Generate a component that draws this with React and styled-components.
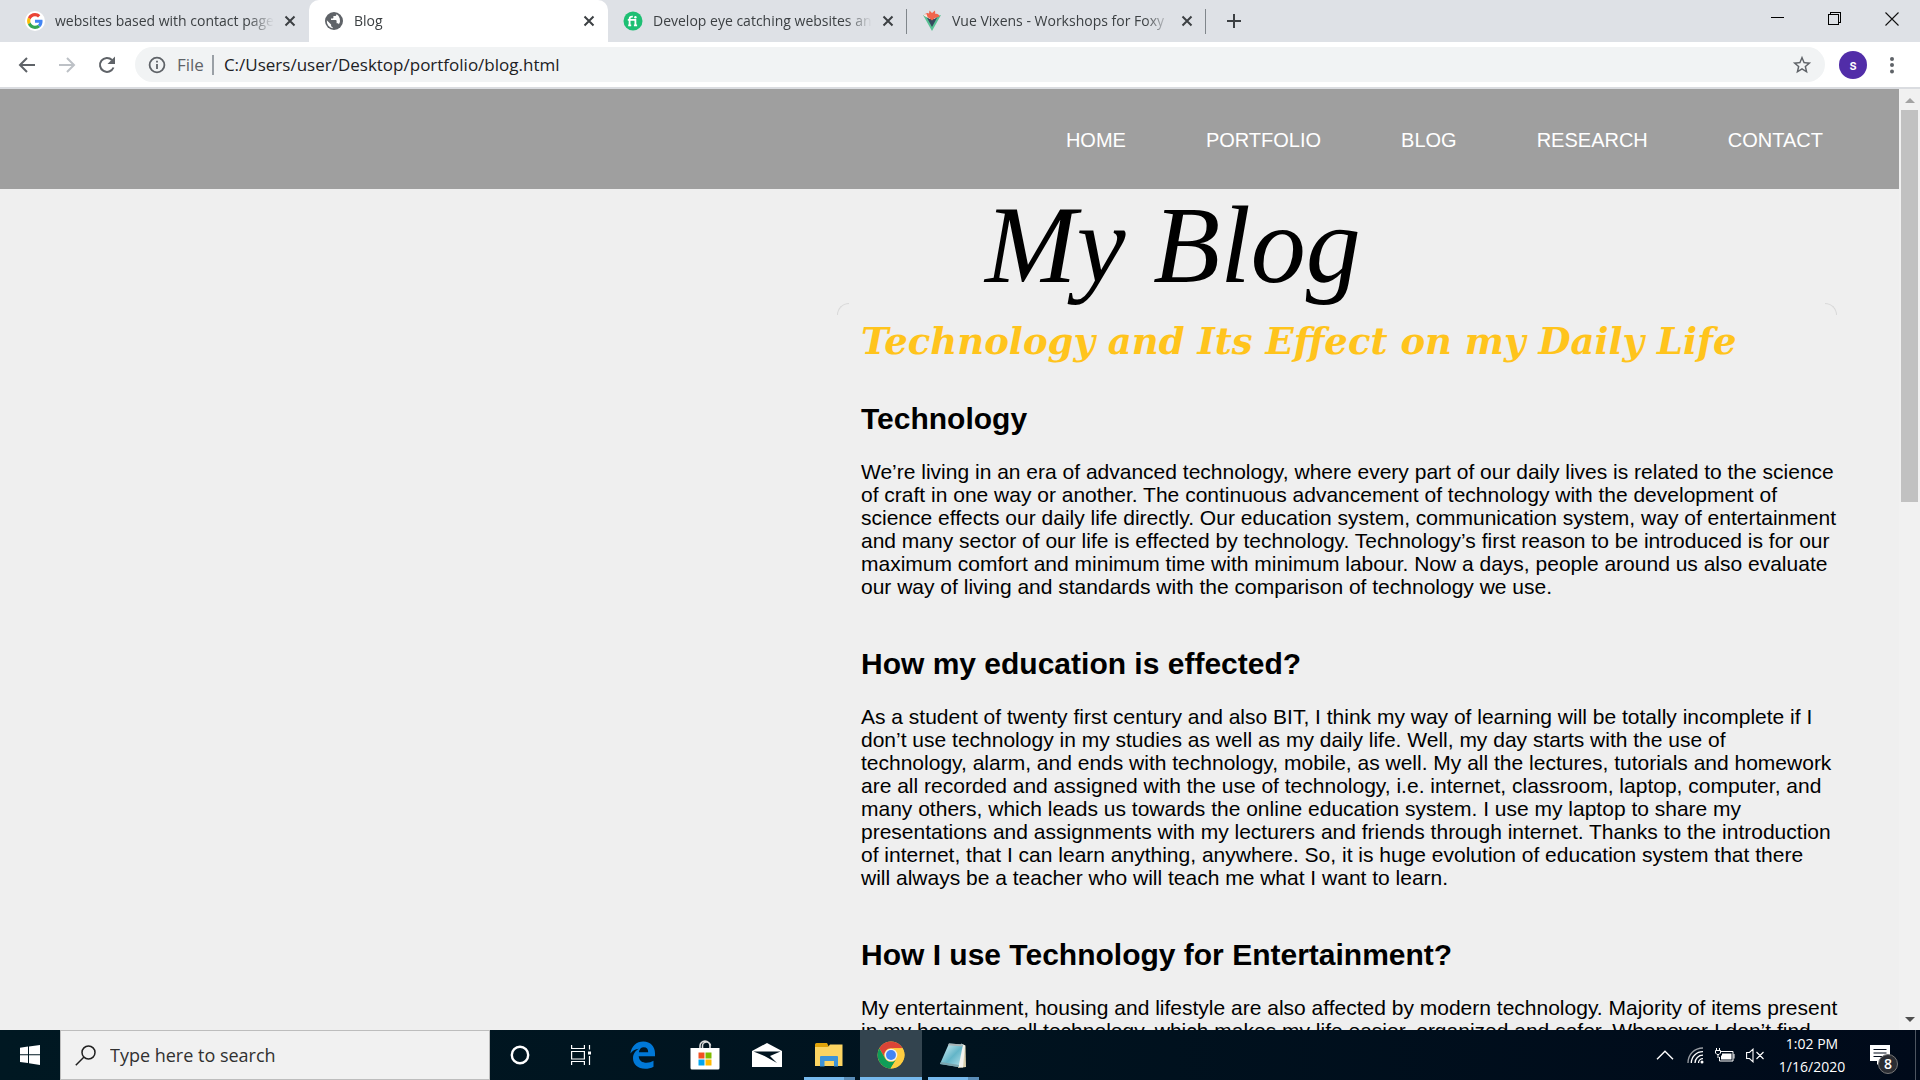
import React from "react";
import styled, { createGlobalStyle } from "styled-components";

const GlobalStyle = createGlobalStyle`
  *, *::before, *::after { box-sizing: border-box; }
  body { margin: 0; background: #efefef; }
  button { border: 0; padding: 0; background: none; color: inherit; font: inherit; }
  svg { display: block; flex: none; }
`;

const ui = `"Open Sans", "Noto Sans", sans-serif`;
const arial = `"Liberation Sans", Arial, sans-serif`;
const serif = `"Liberation Serif", "Times New Roman", serif`;
const wideSerif = `"DejaVu Serif", Georgia, serif`;

const Screen = styled.div`
  display: flex;
  flex-direction: column;
  height: 100vh;
  overflow: hidden;
  font-family: ${ui};
`;

/* ---------- browser window ---------- */

const TabStrip = styled.header`
  display: flex;
  height: 42px;
  flex: none;
  padding-left: 10px;
  background: #dee1e6;
`;

const Tab = styled.div`
  display: flex;
  align-items: center;
  width: 299px;
  padding: 0 11px 0 15px;
  color: #3c4043;
  background: ${(p) => (p.$active ? "#fff" : "transparent")};
  border-radius: ${(p) => (p.$active ? "10px 10px 0 0" : "0")};
`;

const TabLabel = styled.span`
  flex: 1;
  min-width: 0;
  margin-left: 10px;
  overflow: hidden;
  white-space: nowrap;
  font-size: 14px;
  line-height: 20px;
  mask-image: linear-gradient(to right, #000 88%, transparent 100%);
`;

const TabClose = styled.button`
  display: grid;
  place-items: center;
  width: 16px;
  height: 20px;
  margin-left: 8px;
  color: #3c4043;
`;

const TabDivider = styled.span`
  align-self: center;
  width: 1px;
  height: 25px;
  margin-left: -1px;
  background: #80868b;
`;

const NewTab = styled.button`
  display: grid;
  place-items: center;
  width: 56px;
  color: #3c4043;
`;

const WindowButtons = styled.div`
  display: flex;
  margin-left: auto;
`;

const WindowButton = styled.button`
  display: grid;
  place-items: center;
  width: 57px;
  height: 37px;
`;

const Toolbar = styled.div`
  display: flex;
  align-items: center;
  flex: none;
  height: 47px;
  padding: 0 14px 0 7px;
  background: #fff;
  border-bottom: 2px solid #dadce0;
`;

const ToolButton = styled.button`
  display: grid;
  place-items: center;
  width: 40px;
  height: 36px;
  color: ${(p) => (p.$dim ? "#bdc1c6" : "#5f6368")};
`;

const AddressBar = styled.label`
  display: flex;
  align-items: center;
  flex: 1;
  height: 35px;
  margin-left: 8px;
  padding: 0 12px;
  border-radius: 18px;
  background: #f1f3f4;
  color: #5f6368;
  font-size: 17px;
  line-height: 24px;
`;

const Scheme = styled.span`
  margin-left: 10px;
  padding-right: 8px;
`;

const SchemeDivider = styled.span`
  width: 2px;
  height: 20px;
  background: #9aa0a6;
`;

const AddressInput = styled.input`
  flex: 1;
  min-width: 0;
  margin-left: 10px;
  padding: 0;
  border: 0;
  outline: 0;
  background: none;
  color: #202124;
  font-family: ${ui};
  font-size: 17px;
  line-height: 24px;
`;

const Avatar = styled.button`
  width: 28px;
  height: 28px;
  margin: 0 11px 0 14px;
  border-radius: 50%;
  background: #512da8;
  color: #fff;
  font-family: Roboto, ${arial};
  font-size: 14px;
  font-weight: 500;
`;

const MenuButton = styled.button`
  display: grid;
  place-items: center;
  width: 28px;
  height: 28px;
  color: #5f6368;
`;

/* ---------- the web page ---------- */

const Viewport = styled.div`
  display: flex;
  flex: 1;
  min-height: 0;
`;

const Page = styled.div`
  flex: 1;
  min-width: 0;
  overflow: hidden;
  background: #efefef;
  color: #000;
  font-family: ${arial};
`;

const SiteNav = styled.nav`
  display: flex;
  justify-content: flex-end;
  align-items: center;
  gap: 80px;
  height: 100px;
  padding: 2px 76px 0 24px;
  background: #9f9f9f;
`;

const NavLink = styled.a`
  color: #fff;
  font-size: 20px;
  line-height: 24px;
  text-decoration: none;
`;

const Column = styled.main`
  width: 100%;
  max-width: 1000px;
  margin: 0 62px 0 auto;
`;

const PageTitle = styled.h1`
  margin: 0;
  padding-left: 148px;
  font-family: ${serif};
  font-size: 110px;
  font-style: italic;
  font-weight: 400;
  line-height: 112px;
  height: 114px;
`;

const Article = styled.article`
  position: relative;
  padding: 10px 0 0 24px;

  &::before,
  &::after {
    content: "";
    position: absolute;
    top: 0;
    width: 12px;
    height: 12px;
    border-top: 1px solid #d9d9d9;
  }
  &::before {
    left: 0;
    border-left: 1px solid #d9d9d9;
    border-radius: 12px 0 0 0;
  }
  &::after {
    right: 0;
    border-right: 1px solid #d9d9d9;
    border-radius: 0 12px 0 0;
  }
`;

const ArticleTitle = styled.h2`
  margin: 0 0 33px;
  color: #ffc41c;
  font-family: ${wideSerif};
  font-size: 37px;
  font-style: italic;
  font-weight: 700;
  line-height: 56px;
  white-space: nowrap;
`;

const Section = styled.section`
  margin-bottom: 49px;
`;

const SectionTitle = styled.h3`
  margin: 0 0 24px;
  font-size: 30px;
  font-weight: 700;
  line-height: 34px;
`;

const Paragraph = styled.p`
  margin: 0;
  font-size: 21px;
  line-height: 23px;
  white-space: nowrap;
`;

const Line = styled.span`
  display: block;
`;

const Scrollbar = styled.div`
  display: flex;
  flex-direction: column;
  align-items: center;
  width: 21px;
  background: #f1f1f1;
`;

const ScrollButton = styled.button`
  display: grid;
  place-items: center;
  width: 21px;
  height: 21px;
  color: ${(p) => (p.$dim ? "#a3a3a3" : "#505050")};
`;

const Thumb = styled.div`
  width: 17px;
  height: 392px;
  margin-bottom: auto;
  background: #c1c1c1;
`;

/* ---------- taskbar ---------- */

const Taskbar = styled.footer`
  display: flex;
  flex: none;
  height: 50px;
  background: linear-gradient(to right, #001822 0%, #00131f 50%, #000a1a 100%);
  color: #fff;
`;

const StartButton = styled.button`
  display: grid;
  place-items: center;
  width: 60px;
`;

const SearchBox = styled.label`
  display: flex;
  align-items: center;
  width: 430px;
  padding-left: 14px;
  border: 1px solid #bdbdbd;
  background: #f1f1f1;
  color: #202020;
`;

const SearchInput = styled.input`
  flex: 1;
  min-width: 0;
  margin-left: 14px;
  padding: 0;
  border: 0;
  outline: 0;
  background: none;
  font-family: ${ui};
  font-size: 18px;
  line-height: 24px;
  &::placeholder { color: #303030; opacity: 1; }
`;

const AppButton = styled.button`
  position: relative;
  display: grid;
  place-items: center;
  width: ${(p) => (p.$narrow ? "60px" : "62px")};
  background: ${(p) => (p.$active ? "#33444f" : "transparent")};
`;

const Running = styled.span`
  position: absolute;
  bottom: 0;
  left: ${(p) => (p.$full ? "0" : "6px")};
  right: ${(p) => (p.$full ? "0" : "5px")};
  height: 3px;
  background: ${(p) =>
    p.$full ? "#76b9ed" : "linear-gradient(to right, #76b9ed 78%, #5a8db8 78%)"};
`;

const Tray = styled.div`
  display: flex;
  align-items: center;
  margin-left: auto;
  padding-right: 4px;
`;

const TrayButton = styled.button`
  display: grid;
  place-items: center;
  width: 30px;
  height: 50px;
`;

const Clock = styled.time`
  width: 84px;
  font-size: 14px;
  line-height: 23px;
  text-align: center;
`;

const Notifications = styled.button`
  position: relative;
  display: flex;
  align-items: center;
  width: 62px;
  height: 50px;
  padding-left: 16px;
  border-right: 1px solid #4d5560;
`;

const Count = styled.span`
  position: absolute;
  left: 24px;
  top: 24px;
  width: 20px;
  height: 20px;
  border: 1px solid #777;
  border-radius: 50%;
  background: #2b2d33;
  font-size: 14px;
  font-weight: 600;
  line-height: 18px;
`;

/* ---------- drawings ---------- */

const GoogleIcon = () => (
  <svg width="20" height="20" viewBox="0 0 48 48">
    <circle cx="24" cy="24" r="24" fill="#fff" />
    <g transform="translate(5 5) scale(.79)">
      <path fill="#EA4335" d="M24 9.5c3.54 0 6.71 1.22 9.21 3.6l6.85-6.85C35.9 2.38 30.47 0 24 0 14.62 0 6.51 5.38 2.56 13.22l7.98 6.19C12.43 13.72 17.74 9.5 24 9.5z" />
      <path fill="#4285F4" d="M46.98 24.55c0-1.57-.15-3.09-.38-4.55H24v9.02h12.94c-.58 2.96-2.26 5.48-4.78 7.18l7.73 6c4.51-4.18 7.09-10.36 7.09-17.65z" />
      <path fill="#FBBC05" d="M10.53 28.59A14.5 14.5 0 0 1 9.77 24c0-1.6.27-3.14.76-4.59l-7.98-6.19A23.9 23.9 0 0 0 0 24c0 3.88.92 7.54 2.56 10.78l7.97-6.19z" />
      <path fill="#34A853" d="M24 48c6.48 0 11.93-2.13 15.89-5.81l-7.73-6c-2.15 1.45-4.92 2.3-8.16 2.3-6.26 0-11.57-4.22-13.47-9.91l-7.98 6.19C6.51 42.62 14.62 48 24 48z" />
    </g>
  </svg>
);

const GlobeIcon = () => (
  <svg width="20" height="20" viewBox="0 0 20 20">
    <circle cx="10" cy="10" r="9" fill="#5f6368" />
    <path d="M2.800 9.300l4.300 4.200v1c0 .9.600 1.500 1.500 1.500v1.300A7.400 7.400 0 0 1 2.800 9.300zM12.500 3.100v.5c0 .9-.7 1.500-1.500 1.500H9.400v1.600c0 .4-.4.8-.8.8H7v1.600h4.800c.4 0 .8.4.8.8v2.300h.8c.7 0 1.300.5 1.500 1.100A7.400 7.400 0 0 0 12.500 3.100z" fill="#fff" />
  </svg>
);

const FiverrIcon = () => (
  <svg width="20" height="20" viewBox="0 0 20 20">
    <circle cx="10" cy="10" r="9.500" fill="#1dbf73" />
    <g stroke="#fff" strokeWidth="1.800" fill="none">
      <path d="M6.600 14.800V8c0-1.800 1.200-2.600 3.200-2.300M4.800 8.900h7.600v5.900M5.200 14.300h3M10.900 14.300h3.200" />
    </g>
    <circle cx="12.400" cy="6.200" r="1.200" fill="#fff" />
  </svg>
);

const VixensIcon = () => (
  <svg width="20" height="22" viewBox="0 0 20 22">
    <path d="M1 5l9 16 9-16-4 1-5 9-5-9z" fill="#57c193" />
    <path d="M4.500 7L10 17l5.500-10-3 2h-5z" fill="#35495e" />
    <path d="M2 5.500C4 2.500 6 2.500 7 3.500L7.500.5 10 3l3-2.500.3 3.500c2-.5 3.700.5 4.200 2.500L13 8l-3 2.500L7 8z" fill="#f1664d" />
    <path d="M1.500 5.500l2.800-1.800L6 8z" fill="#fbe9e4" />
  </svg>
);

const CrossIcon = () => (
  <svg width="12" height="12" viewBox="0 0 12 12" stroke="currentColor" strokeWidth="2">
    <path d="M1.500 1.500l9 9M10.500 1.500l-9 9" />
  </svg>
);

const PlusIcon = () => (
  <svg width="16" height="16" viewBox="0 0 16 16" stroke="currentColor" strokeWidth="2">
    <path d="M8 1v14M1 8h14" />
  </svg>
);

const MinimizeIcon = () => (
  <svg width="13" height="13" viewBox="0 0 13 13" stroke="#000" shapeRendering="crispEdges">
    <path d="M0 5.500h13" />
  </svg>
);

const RestoreIcon = () => (
  <svg width="13" height="13" viewBox="0 0 13 13" fill="none" stroke="#000" shapeRendering="crispEdges">
    <path d="M.5 2.500h10v10h-10zM2.500 2.500v-2h10v10h-2" />
  </svg>
);

const CloseIcon = () => (
  <svg width="14" height="14" viewBox="0 0 14 14" stroke="#111" strokeWidth="1.100">
    <path d="M.5.5l13 13M13.500.5l-13 13" />
  </svg>
);

const BackIcon = ({ flip }) => (
  <svg width="18" height="18" viewBox="0 0 18 18" fill="none" stroke="currentColor" strokeWidth="2" transform={flip ? "scale(-1 1)" : undefined}>
    <path d="M17 9H2.500M9 2L2 9l7 7" />
  </svg>
);

const ReloadIcon = () => (
  <svg width="20" height="20" viewBox="0 0 20 20">
    <path d="M16.500 12.500A7 7 0 1 1 15 5" fill="none" stroke="currentColor" strokeWidth="2" />
    <path d="M18 1.500V9h-7.500z" fill="currentColor" />
  </svg>
);

const InfoIcon = () => (
  <svg width="20" height="20" viewBox="0 0 20 20" fill="none" stroke="currentColor" strokeWidth="1.800">
    <circle cx="10" cy="10" r="7.400" />
    <path d="M10 9v5M10 5.800v1.800" />
  </svg>
);

const StarIcon = () => (
  <svg width="22" height="22" viewBox="0 0 24 24" fill="#5f6368">
    <path d="M22 9.240l-7.190-.62L12 2 9.190 8.630 2 9.240l5.460 4.730L5.820 21 12 17.270 18.180 21l-1.630-7.030L22 9.240zM12 15.400l-3.760 2.270 1-4.280-3.320-2.880 4.380-.38L12 6.100l1.710 4.040 4.380.38-3.320 2.880 1 4.280L12 15.400z" />
  </svg>
);

const DotsIcon = () => (
  <svg width="6" height="18" viewBox="0 0 6 18" fill="currentColor">
    <circle cx="3" cy="3" r="2" /><circle cx="3" cy="9" r="2" /><circle cx="3" cy="15.500" r="2" />
  </svg>
);

const ArrowIcon = ({ down }) => (
  <svg width="10" height="6" viewBox="0 0 10 6" fill="currentColor">
    <path d={down ? "M0 0h10L5 5z" : "M0 6h10L5 1z"} />
  </svg>
);

const WindowsIcon = () => (
  <svg width="20" height="20" viewBox="0 0 20 20" fill="#fff">
    <path d="M0 2.800L8 1.600v7.700H0zM9 1.400L20 0v9.300H9zM0 10.300h8V18L0 17zM9 10.300h11V20L9 18.300z" />
  </svg>
);

const SearchIcon = () => (
  <svg width="21" height="21" viewBox="0 0 21 21" fill="none" stroke="currentColor" strokeWidth="1.500">
    <circle cx="13.500" cy="7.500" r="6.500" /><path d="M9 12L.8 20.200" />
  </svg>
);

const CortanaIcon = () => (
  <svg width="20" height="20" viewBox="0 0 20 20" fill="none" stroke="#fff" strokeWidth="2.400">
    <circle cx="10" cy="10" r="8.200" />
  </svg>
);

const TaskViewIcon = () => (
  <svg width="21" height="20" viewBox="0 0 21 20" fill="none" stroke="#fff" strokeWidth="1.200">
    <path d="M.6 0v3.500h12.800V0M.6 6.500h12.800v7.500H.6zM.6 20v-3.500h12.800V20M18.500 0v4.500M18.500 11v9" />
    <path d="M17 6.500h3v3h-3z" fill="#fff" stroke="none" />
  </svg>
);

const EdgeIcon = () => (
  <svg width="26" height="28" viewBox="0 0 26 28" fill="#0078d7">
    <path d="M.4 12.500C1.500 5 6.500.5 13.300.5 20.800.5 25 5.800 25 12.200v3.100H8.700c.3 4.500 3.700 6.500 7.800 6.500 2.700 0 5-.7 7-2v6c-2.500 1.400-5.300 2-8.400 2C7.900 27.800 3 23.500 3 17.300c0-4.300 2.200-7.700 6-9.600C5 8.200 2.200 9.800.4 12.500zM8.900 11.200h9.300c0-3-1.500-4.900-4.400-4.900-2.700 0-4.500 2-4.900 4.900z" />
  </svg>
);

const StoreIcon = () => (
  <svg width="30" height="30" viewBox="0 0 30 30">
    <path d="M10 9V6a5 5 0 0 1 10 0v3M12.500 9V6.500a4 4 0 0 1 8-1" fill="none" stroke="#ddd" strokeWidth="1.600" />
    <path d="M.5 8h29v20a1.500 1.500 0 0 1-1.500 1.500H2A1.500 1.500 0 0 1 .5 28z" fill="#fff" />
    <path d="M8.500 12.500h6v6h-6z" fill="#f25022" /><path d="M15.500 12.500h6v6h-6z" fill="#7fba00" />
    <path d="M8.500 19.500h6v6h-6z" fill="#00a4ef" /><path d="M15.500 19.500h6v6h-6z" fill="#ffb900" />
  </svg>
);

const MailIcon = () => (
  <svg width="30" height="24" viewBox="0 0 30 24">
    <path d="M0 8L15 0l15 8v16H0z" fill="#fff" />
    <path d="M1.500 8.500h27L18 13l7 7-12.500-7z" fill="#00131f" />
  </svg>
);

const ExplorerIcon = () => (
  <svg width="28" height="24" viewBox="0 0 28 24">
    <path d="M0 1.500A1.500 1.500 0 0 1 1.500 0H12l2 4h-14z" fill="#e0a30a" />
    <path d="M0 4h13l2-2.500h12.500V23H0z" fill="#fcd462" />
    <path d="M5 23.500V14a1 1 0 0 1 1-1h16a1 1 0 0 1 1 1v9.500h-4V18H9.500v5.500z" fill="#3d93d8" />
  </svg>
);

const ChromeIcon = () => (
  <svg width="28" height="28" viewBox="0 0 48 48">
    <circle cx="24" cy="24" r="23" fill="#ffcd40" />
    <path d="M4 12.500A23 23 0 0 1 44 12.500H24a11.500 11.500 0 0 0-10 17.300z" fill="#db4437" />
    <path d="M4 12.500l10 17.300A11.500 11.500 0 0 0 34 29.800L23 47A23 23 0 0 1 4 12.500z" fill="#0f9d58" />
    <path d="M24 12.500h20A23 23 0 0 1 23.500 47L34 29.800a11.500 11.500 0 0 0-10-17.300z" fill="#ffcd40" />
    <circle cx="24" cy="24" r="10.800" fill="#f1f1f1" /><circle cx="24" cy="24" r="8.500" fill="#4285f4" />
  </svg>
);

const NotepadIcon = () => (
  <svg width="28" height="28" viewBox="0 0 28 28">
    <defs>
      <linearGradient id="pad" x1="0" y1="0" x2="1" y2="1">
        <stop offset="0" stopColor="#e2f6fa" /><stop offset=".55" stopColor="#63b5c8" /><stop offset="1" stopColor="#b9e3ec" />
      </linearGradient>
    </defs>
    <path d="M23 3l3.500 1.500L27 26l-8 1z" fill="#d8cfae" />
    <path d="M22 2.500l4 2-2 22-5-.5z" fill="#f3f3ee" />
    <path d="M10 2.500l14 1L19.500 26 1 23z" fill="url(#pad)" />
    <path d="M10 2.500l14 1-.4 2L9 4.300z" fill="#a9b4b6" />
    <path d="M1 23l18.500 3 .5-2L2 21z" fill="#7ca5ae" />
  </svg>
);

const ChevronIcon = () => (
  <svg width="18" height="10" viewBox="0 0 18 10" fill="none" stroke="#fff" strokeWidth="1.400">
    <path d="M1 9.300l8-8 8 8" />
  </svg>
);

const WifiIcon = () => (
  <svg width="17" height="17" viewBox="0 0 17 17" fill="none" stroke="#fff" strokeWidth="1.300">
    <path d="M1 16C1 7.500 7.500 1 16 1" opacity=".6" /><path d="M4.300 16C4.300 9.500 9.500 4.700 16 4.700M8 16c0-4.500 3.500-7.800 8-7.800M11.500 16c0-2.500 2-4.300 4.500-4.300" />
    <circle cx="15" cy="15" r="1.500" fill="#fff" stroke="none" />
  </svg>
);

const BatteryIcon = () => (
  <svg width="20" height="15" viewBox="0 0 20 15" fill="none" stroke="#fff">
    <path d="M5 3.500h13v9.500H4.500V9M19 6v4.500M1.500 0v2.500M4.500 0v2.500M.5 2.500h5V5L4 6.500H2L.5 5zM3 6.500V10" />
    <path d="M7 5.500h9.500v6H6V8l1-1z" fill="#fff" stroke="none" />
  </svg>
);

const MutedIcon = () => (
  <svg width="19" height="15" viewBox="0 0 19 15" fill="none" stroke="#fff" strokeWidth="1.100">
    <path d="M.6 4.500h2.900L7 1.200v12.600L3.500 10.500H.6zM10.500 4l7 7M17.500 4l-7 7" />
  </svg>
);

const MessageIcon = () => (
  <svg width="20" height="20" viewBox="0 0 20 20">
    <path d="M0 0h20v16h-9l-4 4v-4H0z" fill="#fff" />
    <path d="M3.500 4.500h13M3.500 8h13M3.500 11.500h9" stroke="#000a1a" strokeWidth="1.200" />
  </svg>
);

/* ---------- content ---------- */

const tabs = [
  { label: "websites based with contact page", Icon: GoogleIcon },
  { label: "Blog", Icon: GlobeIcon, active: true },
  { label: "Develop eye catching websites an", Icon: FiverrIcon, divider: true },
  { label: "Vue Vixens - Workshops for Foxy", Icon: VixensIcon, divider: true },
];

const links = ["HOME", "PORTFOLIO", "BLOG", "RESEARCH", "CONTACT"];

const sections = [
  {
    title: "Technology",
    lines: [
      "We’re living in an era of advanced technology, where every part of our daily lives is related to the science",
      "of craft in one way or another. The continuous advancement of technology with the development of",
      "science effects our daily life directly. Our education system, communication system, way of entertainment",
      "and many sector of our life is effected by technology. Technology’s first reason to be introduced is for our",
      "maximum comfort and minimum time with minimum labour. Now a days, people around us also evaluate",
      "our way of living and standards with the comparison of technology we use.",
    ],
  },
  {
    title: "How my education is effected?",
    lines: [
      "As a student of twenty first century and also BIT, I think my way of learning will be totally incomplete if I",
      "don’t use technology in my studies as well as my daily life. Well, my day starts with the use of",
      "technology, alarm, and ends with technology, mobile, as well. My all the lectures, tutorials and homework",
      "are all recorded and assigned with the use of technology, i.e. internet, classroom, laptop, computer, and",
      "many others, which leads us towards the online education system. I use my laptop to share my",
      "presentations and assignments with my lecturers and friends through internet. Thanks to the introduction",
      "of internet, that I can learn anything, anywhere. So, it is huge evolution of education system that there",
      "will always be a teacher who will teach me what I want to learn.",
    ],
  },
  {
    title: "How I use Technology for Entertainment?",
    lines: [
      "My entertainment, housing and lifestyle are also affected by modern technology. Majority of items present",
      "in my house are all technology, which makes my life easier, organized and safer. Whenever I don’t find",
    ],
  },
];

const apps = [
  { name: "Cortana", Icon: CortanaIcon, narrow: true },
  { name: "Task View", Icon: TaskViewIcon },
  { name: "Edge", Icon: EdgeIcon },
  { name: "Store", Icon: StoreIcon },
  { name: "Mail", Icon: MailIcon },
  { name: "File Explorer", Icon: ExplorerIcon, running: true },
  { name: "Chrome", Icon: ChromeIcon, running: true, active: true },
  { name: "Notepad", Icon: NotepadIcon, running: true },
];

export default function App() {
  return (
    <Screen>
      <GlobalStyle />
      <TabStrip>
        {tabs.map(({ label, Icon, active, divider }) => (
          <React.Fragment key={label}>
            <Tab $active={active}>
              <Icon />
              <TabLabel>{label}</TabLabel>
              <TabClose aria-label="Close tab"><CrossIcon /></TabClose>
            </Tab>
            {divider && <TabDivider />}
          </React.Fragment>
        ))}
        <NewTab aria-label="New tab"><PlusIcon /></NewTab>
        <WindowButtons>
          <WindowButton aria-label="Minimize"><MinimizeIcon /></WindowButton>
          <WindowButton aria-label="Restore"><RestoreIcon /></WindowButton>
          <WindowButton aria-label="Close"><CloseIcon /></WindowButton>
        </WindowButtons>
      </TabStrip>
      <Toolbar>
        <ToolButton aria-label="Back"><BackIcon /></ToolButton>
        <ToolButton aria-label="Forward" $dim><BackIcon flip /></ToolButton>
        <ToolButton aria-label="Reload"><ReloadIcon /></ToolButton>
        <AddressBar>
          <InfoIcon />
          <Scheme>File</Scheme>
          <SchemeDivider />
          <AddressInput aria-label="Address" defaultValue="C:/Users/user/Desktop/portfolio/blog.html" />
          <StarIcon />
        </AddressBar>
        <Avatar aria-label="Profile">s</Avatar>
        <MenuButton aria-label="Menu"><DotsIcon /></MenuButton>
      </Toolbar>
      <Viewport>
        <Page>
          <SiteNav>
            {links.map((name) => (
              <NavLink key={name} href={`#${name.toLowerCase()}`}>{name}</NavLink>
            ))}
          </SiteNav>
          <Column>
            <PageTitle>My Blog</PageTitle>
            <Article>
              <ArticleTitle>Technology and Its Effect on my Daily Life</ArticleTitle>
              {sections.map(({ title, lines }) => (
                <Section key={title}>
                  <SectionTitle>{title}</SectionTitle>
                  <Paragraph>
                    {lines.map((line) => (
                      <Line key={line}>{line} </Line>
                    ))}
                  </Paragraph>
                </Section>
              ))}
            </Article>
          </Column>
        </Page>
        <Scrollbar>
          <ScrollButton aria-label="Scroll up" $dim><ArrowIcon /></ScrollButton>
          <Thumb />
          <ScrollButton aria-label="Scroll down"><ArrowIcon down /></ScrollButton>
        </Scrollbar>
      </Viewport>
      <Taskbar>
        <StartButton aria-label="Start"><WindowsIcon /></StartButton>
        <SearchBox>
          <SearchIcon />
          <SearchInput aria-label="Search" placeholder="Type here to search" />
        </SearchBox>
        {apps.map(({ name, Icon, narrow, running, active }) => (
          <AppButton key={name} aria-label={name} $narrow={narrow} $active={active}>
            <Icon />
            {running && <Running $full={active} />}
          </AppButton>
        ))}
        <Tray>
          <TrayButton aria-label="Show hidden icons"><ChevronIcon /></TrayButton>
          <TrayButton aria-label="Network"><WifiIcon /></TrayButton>
          <TrayButton aria-label="Battery"><BatteryIcon /></TrayButton>
          <TrayButton aria-label="Volume"><MutedIcon /></TrayButton>
          <Clock>
            1:02 PM<br />1/16/2020
          </Clock>
          <Notifications aria-label="Notifications">
            <MessageIcon />
            <Count>8</Count>
          </Notifications>
        </Tray>
      </Taskbar>
    </Screen>
  );
}
